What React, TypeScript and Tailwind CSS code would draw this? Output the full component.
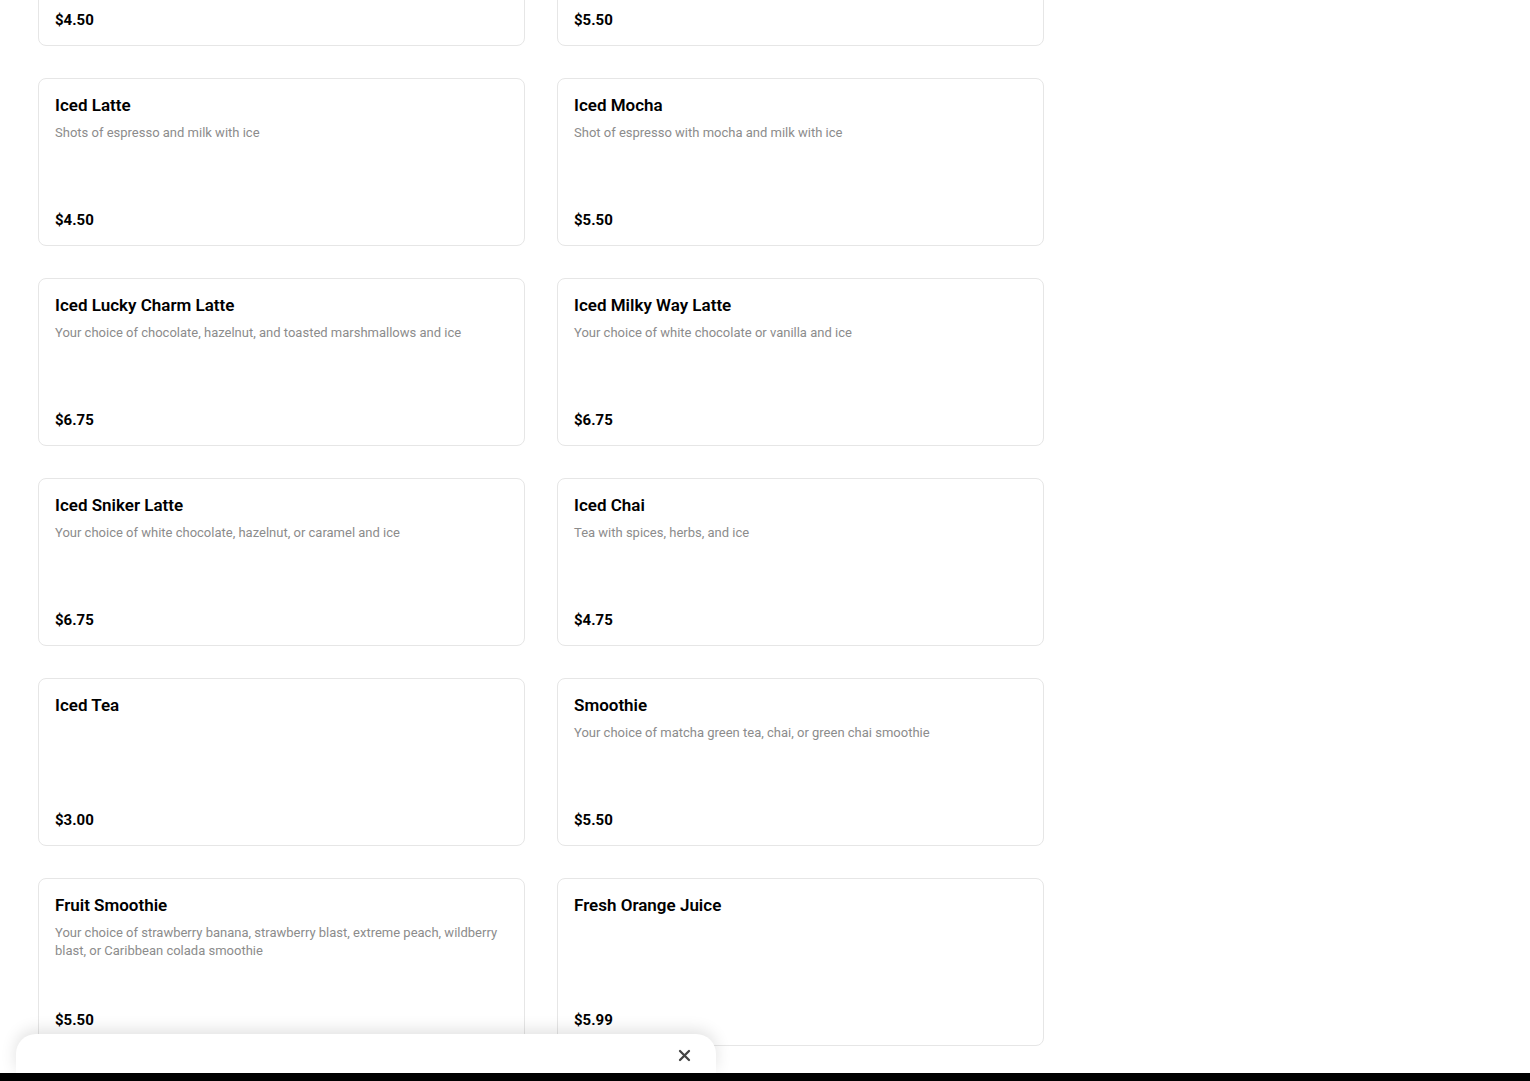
import React from 'react';

type Item = { name: string; desc?: string; price: string };

const items: Item[] = [
  { name: 'Latte', desc: 'Shots of espresso and steamed milk', price: '$4.50' },
  { name: 'Mocha', desc: 'Shot of espresso with mocha and steamed milk', price: '$5.50' },
  { name: 'Iced Latte', desc: 'Shots of espresso and milk with ice', price: '$4.50' },
  { name: 'Iced Mocha', desc: 'Shot of espresso with mocha and milk with ice', price: '$5.50' },
  { name: 'Iced Lucky Charm Latte', desc: 'Your choice of chocolate, hazelnut, and toasted marshmallows and ice', price: '$6.75' },
  { name: 'Iced Milky Way Latte', desc: 'Your choice of white chocolate or vanilla and ice', price: '$6.75' },
  { name: 'Iced Sniker Latte', desc: 'Your choice of white chocolate, hazelnut, or caramel and ice', price: '$6.75' },
  { name: 'Iced Chai', desc: 'Tea with spices, herbs, and ice', price: '$4.75' },
  { name: 'Iced Tea', price: '$3.00' },
  { name: 'Smoothie', desc: 'Your choice of matcha green tea, chai, or green chai smoothie', price: '$5.50' },
  { name: 'Fruit Smoothie', desc: 'Your choice of strawberry banana, strawberry blast, extreme peach, wildberry blast, or Caribbean colada smoothie', price: '$5.50' },
  { name: 'Fresh Orange Juice', price: '$5.99' },
];

function MenuCard({ item }: { item: Item }) {
  return (
    <div className="h-[168px] border border-[#e6e6e6] rounded-lg bg-white px-4 pt-4 pb-[15px] flex flex-col justify-between">
      <div>
        <h3 className="text-[17px] leading-5 font-semibold text-black">{item.name}</h3>
        {item.desc && <p className="mt-[9px] text-[13px] leading-[18px] text-[#8c8c8c]">{item.desc}</p>}
      </div>
      <span className="text-[15px] leading-5 font-bold text-black">{item.price}</span>
    </div>
  );
}

export default function App() {
  return (
    <div className="h-screen overflow-hidden bg-white" style={{ fontFamily: 'Roboto, "Liberation Sans", sans-serif' }}>
      <div className="-mt-[122px] pl-[38px] w-[1044px] grid grid-cols-2 gap-8">
        {items.map((item) => (
          <MenuCard key={item.name} item={item} />
        ))}
      </div>

      <div className="fixed left-0 right-0 bottom-0">
        <div className="ml-4 w-[700px] h-[39px] bg-white rounded-t-[20px] shadow-[0_-4px_16px_rgba(0,0,0,0.12)] flex justify-end items-start pt-[15px] pr-[25px]">
          <button className="text-[#444] leading-none">
            <svg width="13" height="13" viewBox="0 0 13 13">
              <path d="M2 2L11 11M11 2L2 11" stroke="currentColor" strokeWidth="2.3" strokeLinecap="round" />
            </svg>
          </button>
        </div>
        <div className="h-2 bg-black" />
      </div>
    </div>
  );
}
